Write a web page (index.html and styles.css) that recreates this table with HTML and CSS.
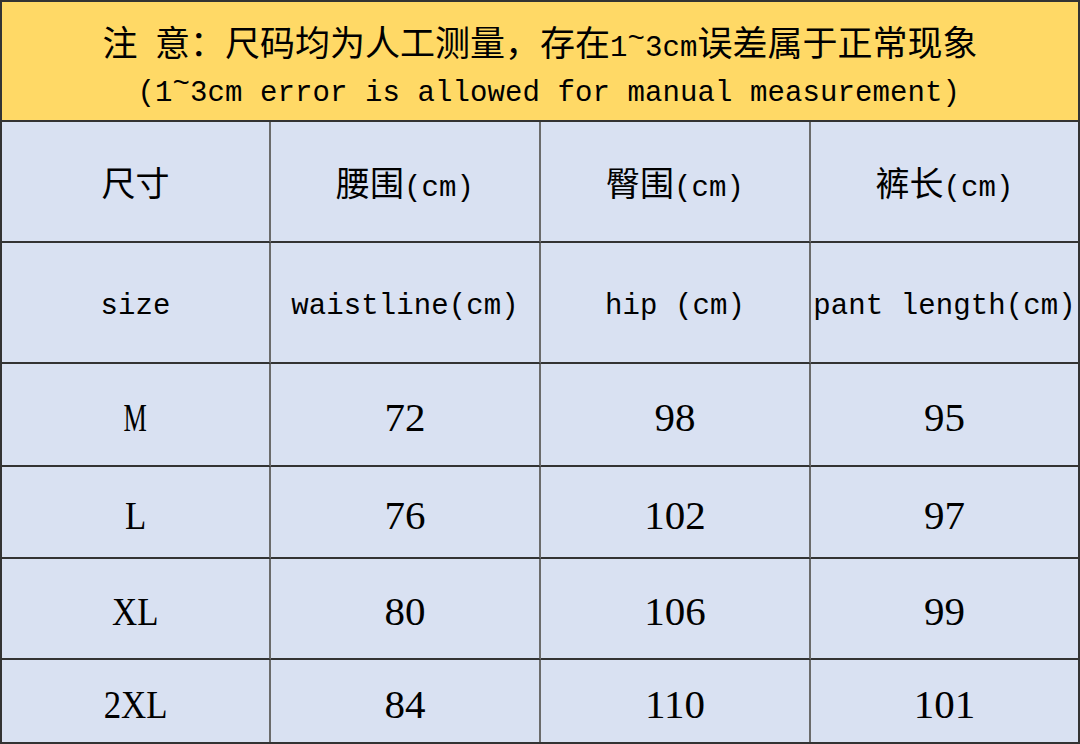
FILE: index.html
```html
<!DOCTYPE html>
<html lang="zh-CN">
<head>
<meta charset="utf-8">
<title>尺码表</title>
<link rel="stylesheet" href="styles.css">
</head>
<body>
<div class="sheet">
  <div class="notice">
    <div class="line">注<span class="mono"> </span>意：尺码均为人工测量，存在<span class="mono">1<span class="tilde">~</span>3cm</span>误差属于正常现象</div>
    <div class="line"><span class="mono"> (1<span class="tilde">~</span>3cm error is allowed for manual measurement)</span></div>
  </div>
  <div class="grid">
    <div class="cell cjk"><span>尺寸</span></div>
    <div class="cell cjk"><span>腰围<span class="mono">(cm)</span></span></div>
    <div class="cell cjk"><span>臀围<span class="mono">(cm)</span></span></div>
    <div class="cell cjk last"><span>裤长<span class="mono">(cm)</span></span></div>

    <div class="cell mono en"><span>size</span></div>
    <div class="cell mono en"><span>waistline(cm)</span></div>
    <div class="cell mono en"><span>hip (cm)</span></div>
    <div class="cell mono en last"><span>pant length(cm)</span></div>

    <div class="cell num"><span class="narrow m">M</span></div>
    <div class="cell num"><span>72</span></div>
    <div class="cell num"><span>98</span></div>
    <div class="cell num last"><span>95</span></div>

    <div class="cell num"><span class="narrow">L</span></div>
    <div class="cell num"><span>76</span></div>
    <div class="cell num"><span>102</span></div>
    <div class="cell num last"><span>97</span></div>

    <div class="cell num"><span class="narrow">XL</span></div>
    <div class="cell num"><span>80</span></div>
    <div class="cell num"><span>106</span></div>
    <div class="cell num last"><span>99</span></div>

    <div class="cell num bottom"><span class="narrow">2XL</span></div>
    <div class="cell num bottom"><span>84</span></div>
    <div class="cell num bottom"><span>110</span></div>
    <div class="cell num bottom last"><span>101</span></div>
  </div>
</div>
</body>
</html>
```

FILE: styles.css
```css
html, body {
  margin: 0;
  padding: 0;
  background: #ffffff;
}

.sheet {
  box-sizing: border-box;
  width: 1080px;
  height: 744px;
  border: 2px solid #333333;
  display: flex;
  flex-direction: column;
  color: #000000;
  font-family: "Noto Sans CJK SC", "Noto Sans CJK JP", sans-serif;
}

.notice {
  box-sizing: border-box;
  height: 120px;
  flex: none;
  background: #ffd966;
  border-bottom: 2px solid #333333;
  padding-top: 16px;
  text-align: center;
  font-size: 35px;
  white-space: nowrap;
}

.line {
  height: 45px;
  line-height: 45px;
}

.mono {
  font-family: "Liberation Mono", "Noto Sans CJK SC", monospace;
  font-size: 29px;
  letter-spacing: 0.1px;
  line-height: 1;
  white-space: pre;
}

.tilde {
  vertical-align: 0.3em;
  line-height: 1;
}

.grid {
  flex: 1;
  display: grid;
  grid-template-columns: 269px 270px 270px 1fr;
  grid-template-rows: 121px 121px 103px 92px 101px 1fr;
  background: #d9e1f2;
}

.cell {
  box-sizing: border-box;
  display: flex;
  align-items: center;
  justify-content: center;
  border-right: 2px solid #6b6b6b;
  border-bottom: 2px solid #333333;
  white-space: nowrap;
}

.cell.last {
  border-right: none;
}

.cell.bottom {
  border-bottom: none;
}

.cjk {
  font-size: 34px;
}

.en {
  padding-top: 8px;
}

.num {
  font-family: "Liberation Serif", serif;
  font-size: 41px;
  padding-top: 5px;
}

.narrow {
  display: inline-block;
  transform: scaleX(0.85);
}

.narrow.m {
  transform: scaleX(0.64);
}
```
